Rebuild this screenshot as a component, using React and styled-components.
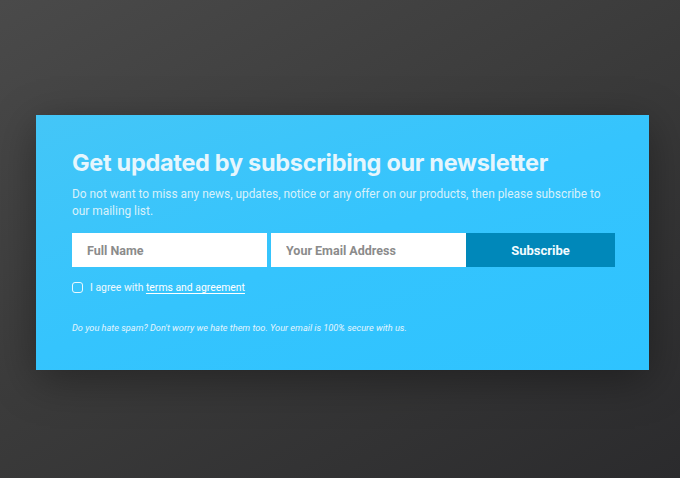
import React from "react";
import styled, { createGlobalStyle } from "styled-components";

const Global = createGlobalStyle`
  html, body {
    margin: 0;
    padding: 0;
    height: 100%;
  }
  body {
    background: linear-gradient(150deg, #4a4a4a 0%, #3a3a3a 50%, #2b2b2d 100%);
    font-family: Roboto, "Liberation Sans", sans-serif;
  }
  #root {
    height: 100%;
  }
`;

const Page = styled.div`
  height: 478px;
  padding: 115px 0 0 36px;
  box-sizing: border-box;
`;

const Card = styled.section`
  width: 613px;
  height: 255px;
  box-sizing: border-box;
  padding: 34px 30px 0 36px;
  background: linear-gradient(160deg, #44c6f7 0%, #35c4fd 50%, #2ec3ff 100%);
  box-shadow: 0 10px 40px rgba(0, 0, 0, 0.35);
`;

const Title = styled.h1`
  margin: 0;
  font-family: Inter, "Open Sans", sans-serif;
  font-size: 23.5px;
  font-weight: 700;
  letter-spacing: -0.3px;
  line-height: 28px;
  color: #e6f6fd;
`;

const Lead = styled.p`
  margin: 9px 0 0 0;
  font-size: 11.9px;
  line-height: 17px;
  color: #d8f1fb;
  max-width: 540px;
`;

const Form = styled.form`
  display: flex;
  margin-top: 13px;
  height: 34px;
`;

const Input = styled.input`
  flex: 0 0 195px;
  height: 34px;
  box-sizing: border-box;
  border: none;
  outline: none;
  padding: 0 15px;
  margin-right: ${(p) => (p.$gap ? "4px" : "0")};
  background: #ffffff;
  font-family: Roboto, "Liberation Sans", sans-serif;
  font-size: 12.5px;
  font-weight: 700;
  color: #555;
  &::placeholder {
    color: #8b8b8b;
  }
`;

const Button = styled.button`
  flex: 0 0 149px;
  height: 34px;
  border: none;
  background: #0088ba;
  color: #f2fbff;
  font-family: Roboto, "Liberation Sans", sans-serif;
  font-size: 13px;
  font-weight: 700;
  cursor: pointer;
`;

const Agree = styled.label`
  display: flex;
  align-items: center;
  gap: 7px;
  margin-top: 14px;
  font-size: 10.4px;
  color: #eef9fe;
`;

const Box = styled.span`
  flex: 0 0 11px;
  height: 11px;
  box-sizing: border-box;
  border: 1.5px solid #eaf8fe;
  border-radius: 3px;
`;

const TermsLink = styled.a`
  color: #ffffff;
  text-decoration: underline;
  text-underline-offset: 2px;
`;

const Note = styled.p`
  margin: 28px 0 0 0;
  font-size: 9.2px;
  font-style: italic;
  color: #e3f5fd;
`;

export default function App() {
  return (
    <>
      <Global />
      <Page>
        <Card>
          <Title>Get updated by subscribing our newsletter</Title>
          <Lead>
            Do not want to miss any news, updates, notice or any offer on our
            products, then please subscribe to our mailing list.
          </Lead>
          <Form onSubmit={(e) => e.preventDefault()}>
            <Input $gap placeholder="Full Name" />
            <Input placeholder="Your Email Address" />
            <Button type="submit">Subscribe</Button>
          </Form>
          <Agree>
            <Box />
            <span>
              I agree with <TermsLink href="#">terms and agreement</TermsLink>
            </span>
          </Agree>
          <Note>
            Do you hate spam? Don't worry we hate them too. Your email is 100%
            secure with us.
          </Note>
        </Card>
      </Page>
    </>
  );
}
